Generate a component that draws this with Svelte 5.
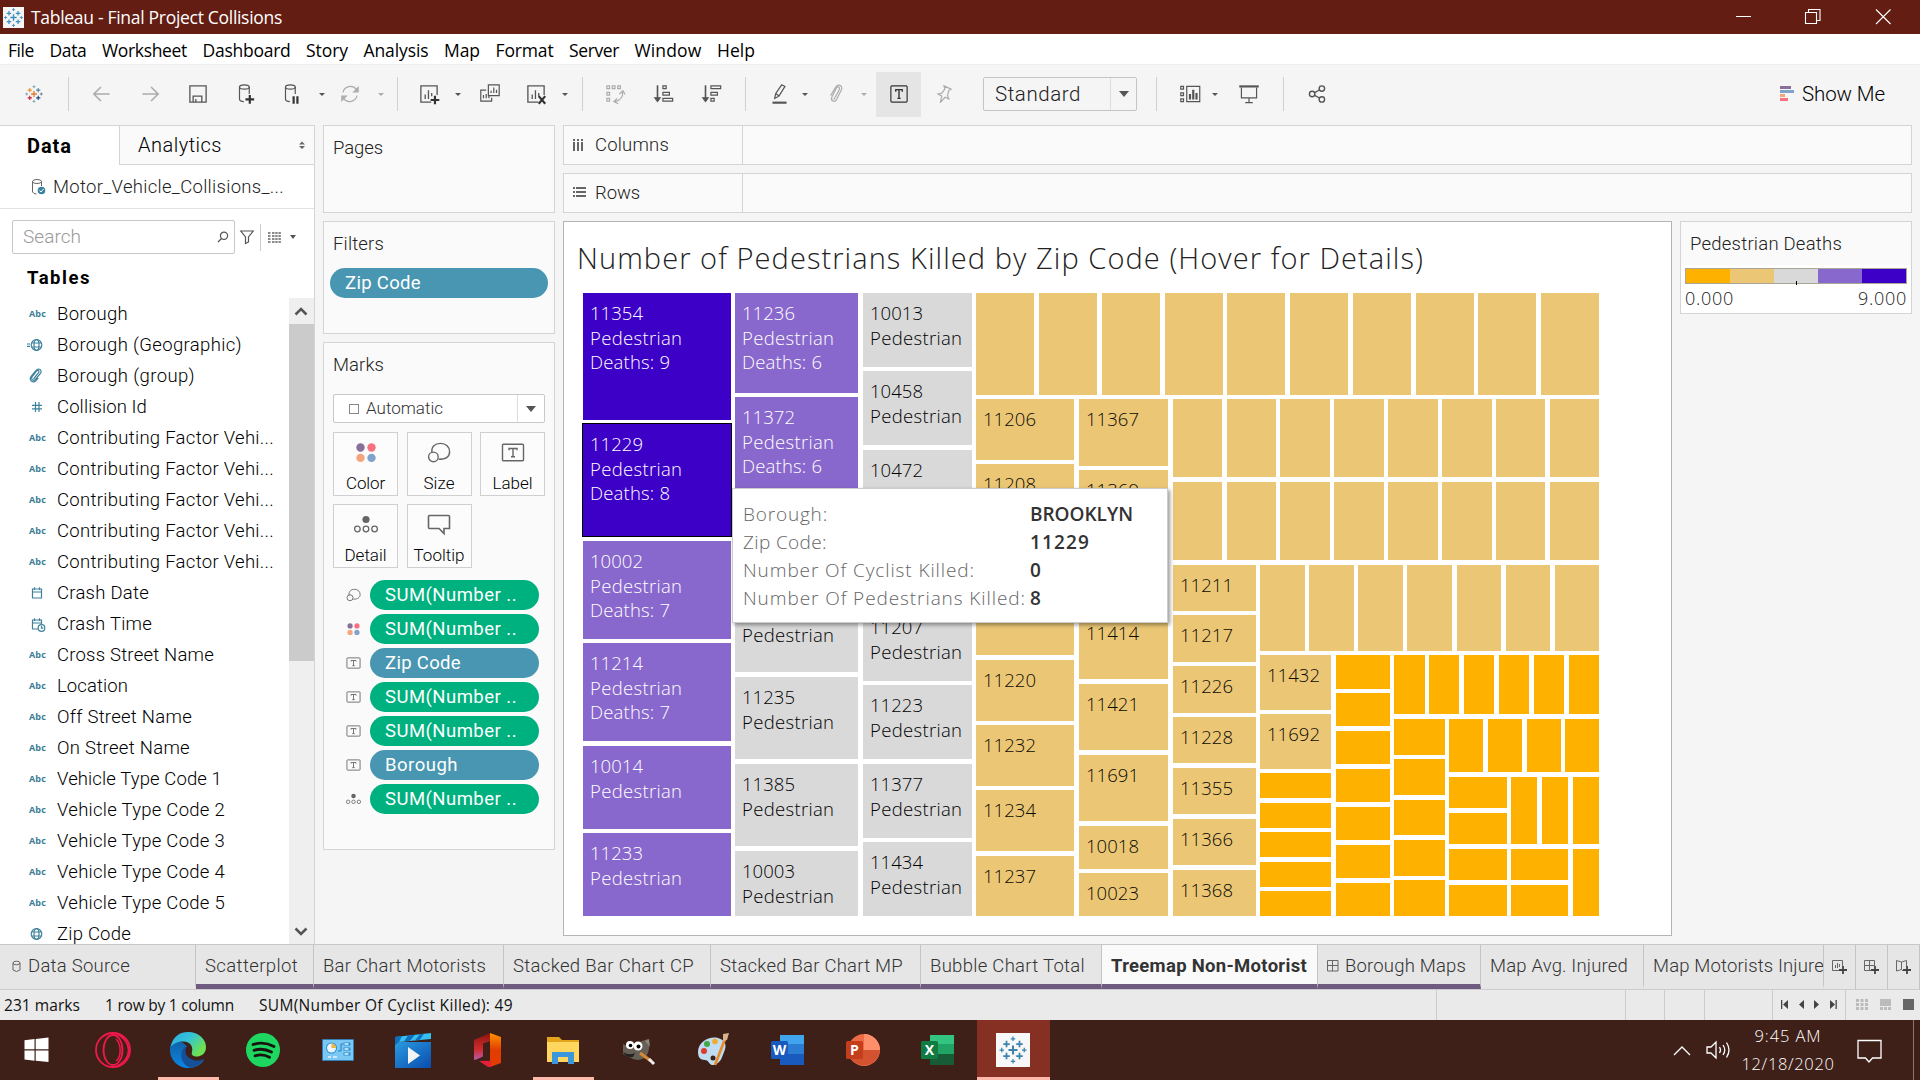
<script>
  // Spreads the letters of a label so that it spans the given width.
  function fit(node, width) {
    if (!width) return;
    node.style.letterSpacing = '0px';
    const natural = node.getBoundingClientRect().width;
    const count = node.textContent.length;
    node.style.letterSpacing = (width - natural) / count + 'px';
  }

  const menu = [
    ['File', 26], ['Data', 37], ['Worksheet', 85], ['Dashboard', 88], ['Story', 42], ['Analysis', 65],
    ['Map', 36], ['Format', 58], ['Server', 50], ['Window', 67], ['Help', 38]
  ];

  // kind, centre on the bar, faded
  const tools = [
    ['tableau', 34], ['sep', 69], ['back', 102, 1], ['forward', 150, 1], ['save', 198], ['dbadd', 246],
    ['dbpause', 292], ['caret', 322], ['refresh', 350, 1], ['caret', 381, 1], ['sep', 398], ['chartadd', 429],
    ['caret', 458], ['duplicate', 490], ['chartclear', 536], ['caret', 565], ['sep', 583], ['swap', 615, 1],
    ['sortasc', 664], ['sortdesc', 712], ['sep', 746], ['pen', 779], ['caret', 805], ['clip', 836, 1],
    ['caret', 864, 1], ['labels', 899], ['pin', 944, 1], ['select', 1060], ['sep', 1157], ['cards', 1190],
    ['caret', 1215], ['present', 1249], ['sep', 1284], ['share', 1317]
  ];
  const toolWidth = { sep: 1, caret: 8, labels: 45, select: 154 };
  let edge = 0;
  const toolbar = tools.map(([kind, centre, faded]) => {
    const w = toolWidth[kind] ?? 26;
    const start = Math.floor(centre - w / 2);
    const gap = start - edge;
    edge = start + w;
    return { kind, w, gap, faded };
  });

  const fields = [
    ['abc', 'Borough', 71], ['geo', 'Borough (Geographic)', 185], ['group', 'Borough (group)', 138],
    ['hash', 'Collision Id', 90], ['abc', 'Contributing Factor Vehi...', 217], ['abc', 'Contributing Factor Vehi...', 217],
    ['abc', 'Contributing Factor Vehi...', 217], ['abc', 'Contributing Factor Vehi...', 217],
    ['abc', 'Contributing Factor Vehi...', 217], ['date', 'Crash Date', 92], ['datetime', 'Crash Time', 95],
    ['abc', 'Cross Street Name', 157], ['abc', 'Location', 71], ['abc', 'Off Street Name', 135],
    ['abc', 'On Street Name', 133], ['abc', 'Vehicle Type Code 1', 165], ['abc', 'Vehicle Type Code 2', 168],
    ['abc', 'Vehicle Type Code 3', 168], ['abc', 'Vehicle Type Code 4', 168], ['abc', 'Vehicle Type Code 5', 168],
    ['globe', 'Zip Code', 74]
  ];

  const markButtons = [['color', 'Color', 39], ['size', 'Size', 31], ['label', 'Label', 40], ['detail', 'Detail', 42], ['tooltip', 'Tooltip', 51]];
  const pills = [
    ['size', 'SUM(Number ..', 0], ['color', 'SUM(Number ..', 0], ['label', 'Zip Code', 1], ['label', 'SUM(Number ..', 0],
    ['label', 'SUM(Number ..', 0], ['label', 'Borough', 1], ['detail', 'SUM(Number ..', 0]
  ];
  const pillText = { 'SUM(Number ..': 132, 'Zip Code': 76, Borough: 73 };

  // Treemap tiles: left, top, right, bottom, shade, label lines
  const P = 'Pedestrian';
  const tiles = [
    [583, 293, 731, 420, 4, ['11354', P, 'Deaths: 9']], [583, 424, 731, 536, 4, ['11229', P, 'Deaths: 8']],
    [583, 541, 731, 639, 3, ['10002', P, 'Deaths: 7']], [583, 643, 731, 741, 3, ['11214', P, 'Deaths: 7']],
    [583, 746, 731, 829, 3, ['10014', P]], [583, 833, 731, 916, 3, ['11233', P]],
    [735, 293, 858, 393, 3, ['11236', P, 'Deaths: 6']], [735, 397, 858, 497, 3, ['11372', P, 'Deaths: 6']],
    [735, 501, 858, 585, 3, []], [735, 590, 858, 672, 2, ['', P]],
    [735, 677, 858, 759, 2, ['11235', P]], [735, 764, 858, 846, 2, ['11385', P]], [735, 851, 858, 916, 2, ['10003', P]],
    [863, 293, 972, 367, 2, ['10013', P]], [863, 371, 972, 445, 2, ['10458', P]], [863, 450, 972, 524, 2, ['10472']],
    [863, 528, 972, 602, 2, []], [863, 607, 972, 681, 2, ['11207', P]], [863, 685, 972, 759, 2, ['11223', P]],
    [863, 764, 972, 838, 2, ['11377', P]], [863, 842, 972, 916, 2, ['11434', P]],
    ...[976, 1039, 1102, 1165, 1227, 1290, 1353, 1416, 1478, 1541].map((x) => [x, 293, x + 58, 395, 1, []]),
    [976, 399, 1074, 460, 1, ['11206']], [976, 464, 1074, 525, 1, ['11208']], [976, 529, 1074, 590, 1, []],
    [976, 594, 1074, 655, 1, []], [976, 660, 1074, 721, 1, ['11220']], [976, 725, 1074, 786, 1, ['11232']],
    [976, 790, 1074, 851, 1, ['11234']], [976, 856, 1074, 916, 1, ['11237']],
    [1079, 399, 1168, 466, 1, ['11367']], [1079, 470, 1168, 537, 1, ['11369']], [1079, 542, 1168, 608, 1, []],
    [1079, 613, 1168, 679, 1, ['11414']], [1079, 684, 1168, 750, 1, ['11421']], [1079, 755, 1168, 821, 1, ['11691']],
    [1079, 826, 1168, 869, 1, ['10018']], [1079, 873, 1168, 916, 1, ['10023']],
    ...[[1173, 1222], [1227, 1276], [1280, 1330], [1334, 1384], [1388, 1438], [1442, 1492], [1496, 1545], [1550, 1599]].flatMap(
      ([a, b]) => [[a, 399, b, 477, 1, []], [a, 482, b, 560, 1, []]]
    ),
    [1173, 565, 1256, 611, 1, ['11211']], [1173, 615, 1256, 662, 1, ['11217']], [1173, 666, 1256, 713, 1, ['11226']],
    [1173, 717, 1256, 763, 1, ['11228']], [1173, 768, 1256, 814, 1, ['11355']], [1173, 819, 1256, 865, 1, ['11366']],
    [1173, 870, 1256, 916, 1, ['11368']],
    ...[[1260, 1305], [1309, 1354], [1358, 1403], [1407, 1452], [1457, 1501], [1506, 1550], [1555, 1599]].map(([a, b]) => [a, 565, b, 651, 1, []]),
    [1260, 655, 1331, 710, 1, ['11432']], [1260, 714, 1331, 769, 1, ['11692']],
    ...[773, 803, 832, 862, 891].map((y) => [1260, y, 1331, y + 25, 0, []]),
    [1336, 655, 1390, 689, 0, []],
    ...[693, 731, 769, 807, 845, 883].map((y) => [1336, y, 1390, y + 33, 0, []]),
    [1394, 655, 1425, 714, 0, []],
    ...[1429, 1464, 1499, 1534, 1569].map((x) => [x, 655, x + 30, 714, 0, []]),
    ...[[719, 755], [759, 795], [800, 835], [840, 876], [880, 916]].map(([a, b]) => [1394, a, 1445, b, 0, []]),
    ...[1449, 1488, 1527, 1565].map((x) => [x, 719, x + 34, 772, 0, []]),
    ...[777, 813, 849, 885].map((y) => [1449, y, 1507, y + 31, 0, []]),
    ...[1511, 1542, 1573].map((x) => [x, 777, x + 26, 844, 0, []]),
    [1511, 849, 1568, 880, 0, []], [1511, 885, 1568, 916, 0, []], [1573, 849, 1599, 916, 0, []]
  ];
  const shades = ['#ffb100', '#ebc775', '#d9d9d9', '#8968cd', '#3d00c6'];
  const inks = ['#000', '#0c0a05', '#000', '#fff', '#fff'];
  const span = (s) => (s === P ? 92 : s.startsWith('D') ? 80 : 53);
  const lineY = [27, 52, 76];

  const tip = [
    ['Borough:', 85, 'BROOKLYN', 103], ['Zip Code:', 84, '11229', 60],
    ['Number Of Cyclist Killed:', 232, '0', 0], ['Number Of Pedestrians Killed:', 283, '8', 0]
  ];

  // label, tab width, text width, variant
  const tabs = [
    ['Data Source', 196, 102, 'source'], ['Scatterplot', 118, 93, 'used'], ['Bar Chart Motorists', 190, 163, 'used'],
    ['Stacked Bar Chart CP', 207, 181, 'used'], ['Stacked Bar Chart MP', 210, 183, 'used'], ['Bubble Chart Total', 181, 155, 'used'],
    ['Treemap Non-Motorist', 216, 196, 'used active'], ['Borough Maps', 163, 121, 'used dash'],
    ['Map Avg. Injured', 163, 138, ''], ['Map Motorists Injure', 180, 171, 'last']
  ];

  const apps = ['windows', 'opera', 'edge', 'spotify', 'panel', 'movies', 'office', 'explorer', 'gimp', 'paint', 'word', 'ppt', 'excel', 'tableauapp'];
</script>

{#snippet plus(x, y, r, c, w)}
  <path d={`M${x - r} ${y}h${2 * r}M${x} ${y - r}v${2 * r}`} stroke={c} stroke-width={w} fill="none" />
{/snippet}

{#snippet tableauMark(mono)}
  {@render plus(12, 12, 3.6, mono || '#e8762d', 1.6)}
  {@render plus(6.8, 7.2, 2.6, mono || '#eb912c', 1.4)}
  {@render plus(17.2, 7.2, 2.6, mono || '#59879b', 1.4)}
  {@render plus(6.8, 16.8, 2.6, mono || '#c72035', 1.4)}
  {@render plus(17.2, 16.8, 2.6, mono || '#1f457e', 1.4)}
  {@render plus(12, 3, 1.8, mono || '#7199a6', 1)}
  {@render plus(12, 21, 1.8, mono || '#7199a6', 1)}
  {@render plus(3, 12, 1.8, mono || '#7199a6', 1)}
  {@render plus(21, 12, 1.8, mono || '#5b6591', 1)}
{/snippet}

{#snippet markIcon(kind)}
  <svg class="mi" viewBox="0 0 24 20">
    {#if kind === 'color'}
      <circle cx="6.500" cy="5" r="4.200" fill="#87719a" /><circle cx="17.500" cy="5" r="4.200" fill="#f8717f" />
      <circle cx="6.500" cy="15.400" r="4.200" fill="#f4a57c" /><circle cx="17.500" cy="15.400" r="4.200" fill="#80a3cc" />
    {:else if kind === 'size'}
      <g fill="none" stroke="#666" stroke-width="1.400"><path d="M5 10.500C4 4 8 .9 13.600.9c5.400 0 9 3.600 9 8.300 0 4.800-4 7.600-11 7.600" /><circle cx="6.400" cy="14.400" r="4.800" /></g>
    {:else if kind === 'label'}
      <rect x="1.500" y="1.800" width="21" height="16.400" rx="1" fill="none" stroke="#666" stroke-width="1.400" />
      <path d="M8 7.800V6h8v1.800M12 6v8.200M10 14.200h4" fill="none" stroke="#666" stroke-width="1.400" />
    {:else if kind === 'detail'}
      <circle cx="12" cy="5" r="3.600" fill="#666" />
      <g fill="none" stroke="#666" stroke-width="1.300"><circle cx="3.400" cy="14.500" r="2.800" /><circle cx="12" cy="14.500" r="2.800" /><circle cx="20.600" cy="14.500" r="2.800" /></g>
    {:else}
      <path d="M2.500 1h19q1 0 1 1v12h-5.500v5L12 14H2.500q-1 0-1-1V2q0-1 1-1z" fill="none" stroke="#666" stroke-width="1.600" />
    {/if}
  </svg>
{/snippet}

{#snippet fieldIcon(kind)}
  <svg class="fi" viewBox="0 0 24 16" fill="none" stroke="#3f829d" stroke-width="1.200">
    {#if kind === 'geo' || kind === 'globe'}
      {#if kind === 'geo'}<path d="M2 7h3M2 9.400h3" />{/if}
      <circle cx="11.500" cy="8" r="5.300" /><ellipse cx="11.500" cy="8" rx="2.500" ry="5.300" /><path d="M6.600 6h9.800M6.600 10h9.800" />
    {:else if kind === 'group'}
      <path d="M8.500 11l5-6c1.500-2-.8-3.300-2-1.800L7.200 8.600C5.200 11.300 8.700 13.700 10.700 11.100L15.500 5.300C17.600 2.300 13.500-.6 11.100 2.300L6.300 8.200c-3 3.800 1.500 7.300 4.500 4.600l2.500-3" />
    {:else if kind === 'hash'}
      <path d="M10.500 3v10M14 3v10M7 6.300h10M7 9.800h10" />
    {:else}
      <path d="M7.500 4h9v9h-9zM7.500 7h9M9.500 2.300V5M14.500 2.300V5" />
      {#if kind === 'datetime'}<circle cx="16.500" cy="12" r="3.300" fill="#fff" /><path d="M16.500 10v2.200h1.800" />{/if}
    {/if}
  </svg>
{/snippet}

{#snippet toolIcon(kind)}
  <svg viewBox="0 0 24 24" width="26" height="26" fill="none" stroke="#555" stroke-width="1.100">
    {#if kind === 'tableau'}
      <g transform="translate(3 3) scale(.75)">{@render tableauMark('')}</g>
    {:else if kind === 'back'}
      <path d="M19 12H5M11 5.500L4.500 12l6.500 6.500" stroke-width="1.500" />
    {:else if kind === 'forward'}
      <path d="M5 12h14M13 5.500l6.500 6.500-6.500 6.500" stroke-width="1.500" />
    {:else if kind === 'save'}
      <path d="M5 4.500h14.500v15H4.500v-15zM7.500 19v-5h8v5M10 16.500V19" stroke-width="1.200" />
    {:else if kind === 'dbadd' || kind === 'dbpause'}
      <ellipse cx="10.500" cy="5.500" rx="4.500" ry="2" /><path d="M6 5.500V17q.5 2 4 2M15 5.500V12" />
      {#if kind === 'dbadd'}<path d="M15.500 13v8M11.500 17h8" stroke-width="2" stroke="#333" />{:else}<path d="M13.500 14v7M17 14v7" stroke-width="2" stroke="#333" />{/if}
    {:else if kind === 'refresh'}
      <path d="M5.500 10.500a7 7 0 0 1 12.500-2.500M18.500 13.500a7 7 0 0 1-12.500 2.500" /><path d="M19.500 6v4h-4zM4.500 18v-4h4z" fill="#555" />
    {:else if kind === 'chartadd' || kind === 'chartclear'}
      <path d="M14 19.500H4.500v-15h15V13M8.500 16.500v-4M11.500 16.500V8.500M14.500 14v-3" stroke-width="1.200" />
      {#if kind === 'chartadd'}<path d="M17.500 13.500v8M13.500 17.500h8" stroke-width="2" stroke="#333" />{:else}<path d="M14.500 14l6 7M20.500 14l-6 7" stroke-width="2" stroke="#333" />{/if}
    {:else if kind === 'duplicate'}
      <path d="M10.500 3.500h10v10h-10zM13 11V9M15.500 11V6M18 11V8M8.500 8.500H3.500v10h10v-3M6 16v-3M8.500 16v-4M11 16v-2" />
    {:else if kind === 'swap'}
      <path d="M4.500 4.500h2.500v2.500H4.500zM9.500 4.500H12v2.500H9.500zM14.500 4.500H17v2.500h-2.500zM4.500 10.500h2.500V13H4.500zM4.500 16h2.500v2.500H4.500zM19 10q1 7-7 9M16 12l3.300-3 2 3.500M14 16l-3 3 4 2" />
    {:else if kind === 'sortasc'}
      <path d="M6 4v14" stroke-width="1.500" /><path d="M3.500 15.500h5L6 19z" fill="#555" /><path d="M11 4.500h3V7h-3zM11 10.500h6V13h-6zM11 16h9v2.500h-9z" />
    {:else if kind === 'sortdesc'}
      <path d="M6 4v14" stroke-width="1.500" /><path d="M3.500 15.500h5L6 19z" fill="#555" /><path d="M11 4.500h9V7h-9zM11 10.500h6V13h-6zM11 16h3v2.500h-3z" />
    {:else if kind === 'pen'}
      <path d="M8 16l1-4.500L14.500 3.500l3 1.500L12 14zM9 11.500l3 2.300" /><path d="M6 20h13" stroke-width="2" />
    {:else if kind === 'clip'}
      <path d="M10 17l5-9c1-2.500-1.700-3.500-2.800-1.300l-4 8c-1.500 4 2.600 5.500 4.500 2L17 8c1.700-4-3.500-6-5.500-2L7 13.500" />
    {:else if kind === 'labels'}
      <rect x="4.500" y="4.500" width="15" height="15" rx="1" stroke="#333" /><path d="M9 10V8h6v2M12 8v8M10.500 16h3" stroke="#333" stroke-width="1.300" />
    {:else if kind === 'pin'}
      <path d="M12 4.500l6.500 3-2.200 1.500-1 4.500 1.200 3-3.500-1.500L8.500 20l1.500-6-3.500-2 3.500-.8 2.700-3.700z" />
    {:else if kind === 'cards'}
      <path d="M9 5h12v14H9zM3.500 5H6v2.500H3.500zM3.500 11H6v2.500H3.500zM3.500 16.500H6V19H3.500z" /><path d="M12 17v-5M15 17V8M18 17v-6" stroke-width="2" />
    {:else if kind === 'present'}
      <path d="M3 5h18" stroke-width="2" /><path d="M5 6v9.500h14V6M12 15.500V20M8.500 20h7" />
    {:else if kind === 'share'}
      <g stroke-width="1.300"><circle cx="7.500" cy="12" r="2.500" /><circle cx="16.500" cy="7" r="2.500" /><circle cx="16.500" cy="17" r="2.500" /><path d="M9.800 10.800l4.400-2.500M9.800 13.200l4.400 2.500" /></g>
    {/if}
  </svg>
{/snippet}

{#snippet docIcon(letter, light, mid, dark, badge)}
  <path d="M10 3h24v10H10z" fill={light} /><path d="M10 12h24v11H10z" fill={mid} /><path d="M10 22h24v11H10z" fill={dark} />
  <rect x="1" y="9" width="17" height="18" rx="1.500" fill={badge} />
  <text x="9.500" y="23" text-anchor="middle" font-size="14" font-weight="700" fill="#fff">{letter}</text>
{/snippet}

{#snippet appIcon(kind)}
  <svg viewBox="0 0 36 36" width="36" height="36">
    {#if kind === 'windows'}
      <path d="M4.500 8.300l10-1.300v10.300h-10zM15.700 7L28.500 5.600v11.700H15.700zM4.500 18.500h10v10.300l-10-1.300zM15.700 18.500h12.800V30l-12.800-1.300z" fill="#fff" />
    {:else if kind === 'opera'}
      <g fill="none" stroke="#f0184c" stroke-width="1.800"><circle cx="18" cy="18" r="17" /><ellipse cx="18" cy="18" rx="9.500" ry="15" /><path d="M20 1.200c18 7 18 27 0 33.600M21 7c5.500 5 5.500 18 0 22" stroke-width="1.500" /></g>
    {:else if kind === 'edge'}
      <defs>
        <linearGradient id="eg" x1="0" y1="0" x2="1" y2=".6"><stop offset="0" stop-color="#2fa8e6" /><stop offset=".5" stop-color="#33c3d9" /><stop offset=".95" stop-color="#6be052" /></linearGradient>
        <linearGradient id="eb" x1="0" y1="0" x2="0" y2="1"><stop offset="0" stop-color="#0f62a8" /><stop offset="1" stop-color="#0c86e2" /></linearGradient>
      </defs>
      <path d="M0 18C0 8 8 9 12 10l6 5-4 8c2 7 10 10 18 5l2-.5C31 33 25 36 18 36 8 36 0 28 0 18z" fill="url(#eb)" />
      <path d="M17 14c-9 3-7 19 4 21.800C27 35 31 31.500 34 27c-9 4-16 0-15.500-7.500z" fill="#154f98" />
      <path d="M.5 15C3 4 10 0 18 0c11 0 18 7.500 18 15 0 7-5 9.500-9.500 9.500-5.500 0-6-1.700-5-3.500C23.500 17 22 9.500 13 9.500 7 9.500 3 12 .5 15z" fill="url(#eg)" />
      <path d="M16.500 15c2.500-2 6 .5 5.200 5-.4 2 .2 3.500 3.300 4.500l-4 2.500c-5-2-7-8-4.500-12z" fill="#3e2019" />
    {:else if kind === 'spotify'}
      <circle cx="18" cy="18" r="17" fill="#1ed760" /><path d="M8 12.500q11-3.500 21 2M9 18.300q9-2.800 17.500 1.700M10 23.800q8-2.300 14.500 1.500" fill="none" stroke="#19130f" stroke-width="2.800" stroke-linecap="round" />
    {:else if kind === 'panel'}
      <rect x="2" y="7" width="32" height="22" rx="1" fill="#2f7fb5" /><rect x="3" y="8" width="30" height="20" fill="#7cc8f5" /><circle cx="11.500" cy="16" r="5.500" fill="#2d8ed0" /><circle cx="11.500" cy="16" r="4.500" fill="#e9f6fd" /><path d="M11.500 16v-4.500a4.500 4.500 0 0 1 4.500 4.500z" fill="#f5b43c" />
      <path d="M23.500 10.500h7v3h-7zM23.500 15.500h7v3h-7zM23.500 20.500h7v3h-7z" fill="#2d8ed0" /><path d="M24.500 12h4M24.500 17h4M24.500 22h4M8 25h3M13 25h4" stroke="#e5f6ff" stroke-width="1.500" /><path d="M18 19h3v-7h2" fill="none" stroke="#2d7db5" />
    {:else if kind === 'movies'}
      <defs><linearGradient id="mv" x1="0" y1="0" x2="1" y2="1"><stop offset="0" stop-color="#2a9be0" /><stop offset="1" stop-color="#0a4cae" /></linearGradient></defs>
      <path d="M0 10.500L6 10h30v26H0z" fill="url(#mv)" /><path d="M0 5L36 1v6L4 10l-4 5z" fill="#35c0f0" /><path d="M0 5l7-.800L4 10l-4 4zM13 3.500l7-.800-5 6-6 .7zM25 2.300l4-.500-4 6-5 .5z" fill="#0e6fc0" /><path d="M13 15v17l12-8.500z" fill="#f4f4f4" />
    {:else if kind === 'office'}
      <defs><linearGradient id="of" x1="0" y1="0" x2="0" y2="1"><stop offset="0" stop-color="#8d150f" /><stop offset=".6" stop-color="#d02b2e" /><stop offset="1" stop-color="#b65ba8" /></linearGradient><linearGradient id="og" x1="0" y1="0" x2="0" y2="1"><stop offset="0" stop-color="#ff9500" /><stop offset=".5" stop-color="#e23c00" /></linearGradient></defs>
      <path d="M4 8L20 1v8l-7 2.500v13L5 28q-1 0-1-1z" fill="url(#of)" /><path d="M20 1l11 4v26l-11 4z" fill="url(#og)" /><path d="M9 29l12-.3V35h-3z" fill="#e2203a" />
    {:else if kind === 'explorer'}
      <path d="M2 5h12l3 3h17v22H2z" fill="#e5a51a" /><path d="M2 10h32v20H2z" fill="#ffd75e" /><path d="M7 20h22v12h-6v-7H13v7H7z" fill="#3a97dd" />
    {:else if kind === 'gimp'}
      <path d="M3 12q5 3 10 0L28 7q3 10-2 18-8 6-17 0l-6-3z" fill="#655f55" /><path d="M25 9l4-2 1 8z" fill="#8e8678" /><circle cx="10" cy="13" r="4" fill="#fff" /><circle cx="18" cy="14" r="4.500" fill="#fff" /><circle cx="10.500" cy="13.500" r="1.800" /><circle cx="18.500" cy="14.500" r="2" /><path d="M3 20q6 4 12 1l-2 4q-7 1-10-5z" fill="#222" /><path d="M20 21l11 8" stroke="#d58b33" stroke-width="3" /><path d="M29 27l5 5" stroke="#eee" stroke-width="3" />
    {:else if kind === 'paint'}
      <path d="M3 20C3 10 14 4 23 6c8 2 9 8 6 14-2 5-3 11-10 13-5 1-5-5-9-5-5 0-7-3-7-8z" fill="#bfdcf0" /><circle cx="9" cy="19" r="3" fill="#dc3c30" /><circle cx="12" cy="12" r="3" fill="#42a94a" /><circle cx="20" cy="9.500" r="2.800" fill="#f2a92c" /><circle cx="18" cy="26" r="2.500" fill="#3e2019" /><path d="M30 7L20 33" stroke="#e68b27" stroke-width="2.600" /><path d="M28 2l6-1-2 7-4 1z" fill="#d9b48a" />
    {:else if kind === 'word'}
      {@render docIcon('W', '#41a5ee', '#2b7cd3', '#185abd', '#185abd')}
    {:else if kind === 'excel'}
      {@render docIcon('X', '#33c481', '#21a366', '#185c37', '#107c41')}
    {:else if kind === 'ppt'}
      <circle cx="19" cy="18" r="16" fill="#ed6c47" /><path d="M19 2a16 16 0 0 1 16 16H19z" fill="#ff8f6b" /><path d="M35 18a16 16 0 0 1-30 7l14-7z" fill="#d35230" />
      <rect x="1" y="9" width="17" height="18" rx="1.500" fill="#c43e1c" /><text x="9.500" y="23" text-anchor="middle" font-size="14" font-weight="700" fill="#fff">P</text>
    {:else}
      <rect x="0" y="1" width="34" height="34" fill="#f7f7f7" /><g transform="translate(2 3) scale(1.250)">{@render tableauMark('#3b83ae')}</g>
    {/if}
  </svg>
{/snippet}

<div class="screen">
  <header class="titlebar">
    <svg class="logo" viewBox="0 0 24 24"><rect width="24" height="24" fill="#f5f5f5" />{@render tableauMark('#3b8fc0')}</svg>
    <span use:fit={251}>Tableau - Final Project Collisions</span>
    <svg class="winbtns" viewBox="0 0 176 34" fill="none" stroke="#fff" stroke-width="1.100">
      <path d="M8 16.500h15M77.500 12.500h11v11h-11zM80.500 12V9.500h11.500v11H89M148 9.500l14.500 14.500M162.500 9.500L148 24" />
    </svg>
  </header>

  <nav class="menu">
    {#each menu as [label, w]}<span use:fit={w}>{label}</span>{/each}
  </nav>

  <div class="toolbar">
    {#each toolbar as t}
      <div class="tool {t.kind}" class:faded={t.faded} style:width="{t.w}px" style:margin-left="{t.gap}px">
        {#if t.kind === 'select'}
          <span use:fit={86}>Standard</span><i><b class="arrow"></b></i>
        {:else if t.kind === 'caret'}
          <b class="arrow small"></b>
        {:else if t.kind !== 'sep'}
          {@render toolIcon(t.kind)}
        {/if}
      </div>
    {/each}
    <div class="showme">
      <svg width="14" height="16"><path d="M0 0h11v3H0z" fill="#87719a" /><path d="M0 4h14v3H0z" fill="#80a3cc" /><path d="M0 8h5v3H0z" fill="#f4a57c" /><path d="M0 12h8v3H0z" fill="#f8717f" /></svg>
      <span use:fit={83}>Show Me</span>
    </div>
  </div>

  <main>
    <aside class="data">
      <div class="dtabs">
        <div class="dtab on"><span use:fit={45}>Data</span></div>
        <div class="dtab off"><span use:fit={84}>Analytics</span><svg width="6" height="8"><path d="M0 3.500L3 .5l3 3zM0 5l3 3 3-3z" fill="#666" /></svg></div>
      </div>
      <div class="source">
        <svg width="16" height="18" viewBox="0 0 16 18" fill="none" stroke="#666"><ellipse cx="6" cy="3.500" rx="4.500" ry="2" /><path d="M1.500 3.500V14q1 2 4 2M10.500 3.500V8" /><circle cx="10.500" cy="12.500" r="3.800" fill="#3b829e" stroke="none" /><path d="M8.500 12.500l1.500 1.500 2.500-3" stroke="#fff" /></svg>
        <span use:fit={231}>Motor_Vehicle_Collisions_...</span>
      </div>
      <div class="searchrow">
        <div class="search"><span use:fit={58}>Search</span><svg width="12" height="12" fill="none" stroke="#555" stroke-width="1.200"><circle cx="7" cy="4.800" r="3.600" /><path d="M4.500 7.500L1 11" /></svg></div>
        <svg class="funnel" width="14" height="14" fill="none" stroke="#555" stroke-width="1.200"><path d="M.8 1h12.400L8.500 7v5l-3 1.500V7z" /></svg>
        <i></i>
        <svg width="13" height="11" stroke="#666" stroke-width="1.300"><path d="M0 1h3M4 1h9M0 4h3M4 4h9M0 7h3M4 7h9M0 10h3M4 10h9" stroke-dasharray="2.500 .7" /></svg>
        <b class="arrow mid"></b>
      </div>
      <h2><span use:fit={64}>Tables</span></h2>
      <div class="listwrap">
        <div class="fields">
          {#each fields as [kind, name, w]}
            <div class="field">
              {#if kind === 'abc'}<em><span use:fit={17}>Abc</span></em>{:else}{@render fieldIcon(kind)}{/if}
              <span use:fit={w}>{name}</span>
            </div>
          {/each}
        </div>
        <div class="scroll">
          <svg width="24" height="26"><path d="M6.500 16.500L12 11l5.500 5.500" /></svg>
          <div class="thumb"></div>
          <svg width="24" height="26"><path d="M6.500 10.500L12 16l5.500-5.500" /></svg>
        </div>
      </div>
    </aside>

    <section class="cards">
      <div class="card pages"><h3><span use:fit={50}>Pages</span></h3></div>
      <div class="card filters"><h3><span use:fit={51}>Filters</span></h3><div class="pill blue"><span use:fit={76}>Zip Code</span></div></div>
      <div class="card marks">
        <h3><span use:fit={51}>Marks</span></h3>
        <div class="dropdown"><u></u><span use:fit={77}>Automatic</span><i><b class="arrow"></b></i></div>
        <div class="buttons">
          {#each markButtons as [kind, label, w]}
            <div class="mbtn">{@render markIcon(kind)}<span use:fit={w}>{label}</span></div>
          {/each}
        </div>
        <div class="pills">
          {#each pills as [kind, label, blue]}
            <div class="prow">{@render markIcon(kind)}<div class="pill" class:blue><span use:fit={pillText[label]}>{label}</span></div></div>
          {/each}
        </div>
      </div>
    </section>

    <section class="work">
      <div class="shelf"><div><svg width="11" height="13" fill="#666"><path d="M0 0h2v2H0zM4 0h2v2H4zM8 0h2v2H8zM0 3h2v9H0zM4 3h2v9H4zM8 3h2v9H8z" /></svg><span use:fit={74}>Columns</span></div></div>
      <div class="shelf"><div><svg width="13" height="12" fill="#666"><path d="M0 0h2v2H0zM0 4h2v2H0zM0 8h2v2H0zM3 0h10v2H3zM3 4h10v2H3zM3 8h10v2H3z" /></svg><span use:fit={45}>Rows</span></div></div>
      <div class="lower">
        <div class="viz">
          <h1><span use:fit={847}>Number of Pedestrians Killed by Zip Code (Hover for Details)</span></h1>
          <svg class="treemap" viewBox="582 292 1018 625" width="1018" height="625">
            {#each tiles as [x, y, r, b, shade, lines]}
              <rect {x} {y} width={r - x} height={b - y} fill={shades[shade]} />
              {#each lines as line, i}
                {#if line}<text x={x + 7} y={y + lineY[i]} fill={inks[shade]} textLength={span(line)}>{line}</text>{/if}
              {/each}
            {/each}
            <rect x="582.500" y="423.500" width="149" height="113" fill="none" stroke="#000" />
          </svg>
          <div class="tip">
            {#each tip as [k, kw, v, vw]}
              <span class="k"><span use:fit={kw}>{k}</span></span><span class="v"><span use:fit={vw}>{v}</span></span>
            {/each}
          </div>
        </div>
        <div class="legend">
          <h3><span use:fit={152}>Pedestrian Deaths</span></h3>
          <div class="ramp">{#each shades as c}<i style:background={c}></i>{/each}<s></s></div>
          <div class="ends"><span use:fit={49}>0.000</span><span use:fit={49}>9.000</span></div>
        </div>
      </div>
    </section>
  </main>

  <div class="tabs">
    {#each tabs as [label, w, tw, kind]}
      <div class="tab {kind}" style:width="{w}px">
        {#if kind === 'source'}<svg width="9" height="13" fill="none" stroke="#666"><ellipse cx="4.500" cy="3" rx="3.500" ry="1.800" /><path d="M1 3v7q3.500 3 7 0V3" /></svg>{/if}
        {#if kind === 'used dash'}<svg width="12" height="12" fill="none" stroke="#666"><path d="M.5.500h10.500v10.500H.5zM5.500.500v10.500M.5 5.500h10.500" /></svg>{/if}
        <span use:fit={tw}>{label}</span>
      </div>
    {/each}
    {#each ['sheet', 'dash', 'story'] as kind}
      <div class="newtab">
        <svg width="17" height="16" fill="none" stroke="#666">
          {#if kind === 'sheet'}<path d="M8 11.500H1.500V1.500h10V7M4.500 9V6M6.500 9V4M8.500 8V5" />{:else if kind === 'dash'}<path d="M8 11.500H1.500V1.500h10V7M6.500 1.500v10M1.500 6.500h10" />{:else}<path d="M8 12L6.500 10.500 1.500 12V1.500l5 1.500 5-1.500V7M6.500 3v7.500" />{/if}
          <path d="M12 7v8M8 11h8" stroke-width="1.800" stroke="#444" />
        </svg>
      </div>
    {/each}
  </div>

  <div class="status">
    <span use:fit={76}>231 marks</span><span use:fit={129}>1 row by 1 column</span><span use:fit={254}>SUM(Number Of Cyclist Killed): 49</span>
    <div class="cells">
      <i></i><i></i><i></i><i></i>
      <i><svg width="60" height="12" fill="#444"><path d="M2 1h1.300v9H2zM9 1v9L4 5.500zM25 1v9l-5-4.500zM35 1v9l5-4.500zM51 1v9l5-4.500zM56.500 1h1.300v9h-1.300z" /></svg></i>
      <i><svg width="60" height="12"><path d="M0 0h3v3H0zM4.500 0h3v3h-3zM9 0h3v3H9zM0 4h3v3H0zM4.500 4h3v3h-3zM9 4h3v3H9zM0 8h3v3H0zM4.500 8h3v3h-3zM9 8h3v3H9zM24 0h11v7H24zM24 8h3v3h-3zM28 8h3v3h-3zM32 8h3v3h-3z" fill="#bbb" /><path d="M47 0h11v11H47z" fill="#666" /></svg></i>
    </div>
  </div>

  <footer>
    {#each apps as app}
      <div class="app" class:open={app === 'edge' || app === 'explorer'} class:current={app === 'tableauapp'}>{@render appIcon(app)}</div>
    {/each}
    <div class="tray">
      <svg width="18" height="12"><path d="M1 11L9 3l8 8" /></svg>
      <svg width="26" height="22"><path d="M1 8h4l5-5v16l-5-5H1zM13.500 8q2 3 0 6M17 6q3.500 5 0 10M20.500 3.500q5 7.500 0 15" /></svg>
      <div class="clock"><span use:fit={67}>9:45 AM</span><span use:fit={93}>12/18/2020</span></div>
      <svg class="note" width="25" height="25"><path d="M1 1.500h23v17.500h-8.500L12 23l-3.500-4H1z" stroke-width="1.600" /></svg>
      <i></i>
    </div>
  </footer>
</div>

<style>
  :global(body) { margin: 0; background: #f5f5f5; }
  * { box-sizing: border-box; }
  .screen { width: 1920px; height: 1080px; display: flex; flex-direction: column; overflow: hidden; background: #f5f5f5; font-family: Roboto, "Liberation Sans", sans-serif; font-size: 18.500px; font-weight: 300; color: #222; }
  span { white-space: nowrap; display: inline-block; }
  svg { display: block; flex: none; overflow: visible; }
  h1, h2, h3 { margin: 0; font-weight: inherit; }

  .titlebar { height: 34px; flex: none; background: #631d12; color: #fff; display: flex; align-items: center; padding-left: 3px; font: 17.500px "Open Sans", sans-serif; }
  .logo { width: 21px; height: 21px; margin-right: 7px; }
  .winbtns { width: 176px; height: 34px; margin-left: auto; margin-right: 16px; }

  .menu { height: 30px; flex: none; background: #fff; display: flex; align-items: center; gap: 15.500px; padding: 1px 0 0 8px; font: 17.500px "Open Sans", sans-serif; color: #000; }

  .toolbar { height: 61px; flex: none; display: flex; align-items: center; border-top: 1px solid #eee; padding-bottom: 2px; }
  .tool { height: 44px; flex: none; display: flex; align-items: center; justify-content: center; }
  .tool.faded { opacity: .45; }
  .sep { background: #d0d0d0; height: 34px; }
  .labels { background: #e5e5e5; height: 45px; }
  .select { height: 34px; border: 1px solid #c4c4c4; border-radius: 2px; justify-content: space-between; padding-left: 11px; font-size: 20.500px; }
  .select i { width: 26px; height: 32px; border-left: 1px solid #ddd; display: flex; align-items: center; justify-content: center; }
  .arrow { width: 0; height: 0; border: 5px solid transparent; border-top: 6px solid #555; border-bottom: 0; }
  .arrow.small { border-width: 3px; border-top-width: 3px; border-bottom: 0; }
  .arrow.mid { border-width: 3.500px; border-top-width: 4px; border-bottom: 0; }
  .showme { margin-left: auto; margin-right: 35px; display: flex; align-items: center; gap: 8px; font-size: 20.500px; color: #000; }

  main { height: 819px; flex: none; display: flex; gap: 8px; }
  .data { width: 315px; height: 819px; background: #fff; border-top: 1px solid #d4d4d4; border-right: 1px solid #d4d4d4; display: flex; flex-direction: column; color: #111; }
  .dtabs { display: flex; height: 39px; flex: none; font-size: 20px; color: #000; }
  .dtab { display: flex; align-items: center; }
  .dtab.on { width: 119px; font-weight: 700; padding-left: 27px; }
  .dtab.off { flex: 1; background: #fafafa; border-left: 1px solid #d4d4d4; border-bottom: 1px solid #d4d4d4; padding: 0 9px 0 18px; justify-content: space-between; }
  .source { height: 44px; flex: none; border-bottom: 1px solid #e2e2e2; display: flex; align-items: center; gap: 6px; padding-left: 31px; color: #222; }
  .searchrow { height: 34px; flex: none; margin-top: 11px; padding-left: 12px; display: flex; align-items: center; }
  .search { width: 223px; height: 34px; border: 1px solid #c8c8c8; border-radius: 2px; display: flex; align-items: center; justify-content: space-between; padding: 0 5px 0 10px; color: #999; font-size: 19px; }
  .search span { margin-top: -2px; }
  .funnel { margin-left: 5px; }
  .searchrow i { width: 1px; height: 27px; background: #ccc; margin: 0 7px 0 6px; }
  .searchrow .mid { margin-left: 9px; }
  h2 { font-weight: 700; font-size: 18.500px; height: 44px; flex: none; padding: 13px 0 0 27px; line-height: 22px; color: #000; }
  .listwrap { flex: 1; display: flex; min-height: 0; }
  .fields { flex: 1; overflow: hidden; }
  .field { height: 31px; display: flex; align-items: center; padding-left: 25px; }
  .field > span { color: #000; }
  .field em { width: 32px; padding-left: 4px; font: 700 9px/10px "Open Sans", sans-serif; color: #3b7c96; }
  .fi { width: 24px; height: 16px; margin-right: 8px; }
  .scroll { width: 25px; background: #efefef; display: flex; flex-direction: column; justify-content: space-between; }
  .scroll path { fill: none; stroke: #555; stroke-width: 2.500; }
  .thumb { height: 337px; background: #cbcbcb; margin-bottom: 257px; }

  .cards { width: 232px; display: flex; flex-direction: column; }
  .card { background: #fafafa; border: 1px solid #d4d4d4; padding: 0 6px; }
  h3 { font-size: 18.500px; line-height: 24px; padding: 10px 0 0 3px; color: #222; }
  .pages { height: 88px; } .filters { height: 113px; margin-top: 8px; } .marks { height: 508px; margin-top: 8px; }
  .filters .pill { width: 218px; margin-top: 12px; }
  .pill { height: 30px; border-radius: 15px; background: #00b180; color: #fff; display: flex; align-items: center; padding-left: 15px; font-weight: 400; font-size: 18.500px; }
  .pill.blue { background: #4996b2; }
  .dropdown { height: 29px; margin: 17px 0 0 3px; width: 212px; background: #fff; border: 1px solid #c8c8c8; border-radius: 2px; display: flex; align-items: center; font-size: 17px; color: #333; }
  .dropdown span { margin-top: -2px; }
  .dropdown u { width: 10px; height: 10px; border: 1px solid #888; margin: 0 7px 0 15px; }
  .dropdown i { width: 27px; height: 27px; margin-left: auto; border-left: 1px solid #ddd; display: flex; align-items: center; justify-content: center; }
  .buttons { display: grid; grid-template-columns: 65px 65px 65px; gap: 8px 8.500px; margin: 9px 0 0 3px; }
  .mbtn { height: 64px; border: 1px solid #d0d0d0; background: #fcfcfc; display: flex; flex-direction: column; align-items: center; padding-top: 9px; font-size: 17px; line-height: 22px; color: #000; }
  .mi { width: 24px; height: 21px; margin-bottom: 9px; }
  .pills { margin-top: 12px; display: flex; flex-direction: column; gap: 4px; }
  .prow { display: flex; align-items: center; padding-left: 16px; gap: 9px; }
  .prow .mi { width: 15px; height: 14px; margin: 0; }
  .prow .pill { width: 169px; }

  .work { width: 1349px; display: flex; flex-direction: column; }
  .shelf { height: 40px; flex: none; margin-bottom: 8px; background: #fafafa; border: 1px solid #d4d4d4; }
  .shelf div { width: 179px; height: 38px; border-right: 1px solid #d4d4d4; display: flex; align-items: center; padding-left: 9px; }
  .shelf svg { width: 22px; }
  .lower { display: flex; gap: 8px; align-items: flex-start; }
  .viz { width: 1109px; height: 715px; border: 1px solid #b4b4b4; background: #fff; position: relative; padding-left: 18px; }
  h1 { height: 70px; margin-left: -5px; line-height: 71px; font-family: "Open Sans", sans-serif; font-weight: 300; font-size: 29px; color: #222; }
  .treemap text { font: 300 18.500px "Open Sans", sans-serif; }
  .tip { position: absolute; left: 168px; top: 266px; width: 436px; height: 135px; background: #fff; border: 1px solid #ccc; box-shadow: 2px 2px 4px rgba(0, 0, 0, .4); padding: 11px 0 0 10px; display: grid; grid-template-columns: 287px 1fr; grid-auto-rows: 28px; font: 19px/28px "Open Sans", sans-serif; }
  .k { color: #666; font-weight: 300; } .v { color: #333; font-weight: 600; }
  .legend { width: 232px; height: 93px; border: 1px solid #d4d4d4; background: #fff; }
  .legend h3 { background: #fafafa; height: 43px; padding: 10px 0 0 9px; }
  .ramp { height: 16px; margin: 3px 4px 0; border: 1px solid #aaa696; display: flex; position: relative; }
  .ramp i { flex: 1; }
  .ramp s { position: absolute; left: 110px; top: 12px; width: 1px; height: 4px; background: #000; }
  .ends { display: flex; justify-content: space-between; padding: 1px 4px; font: 300 18px/26px "Open Sans", sans-serif; }

  .tabs { height: 46px; flex: none; display: flex; background: #e6e6e6; border-top: 1px solid #c8c8c8; border-bottom: 1px solid #ccc; }
  .tab { flex: none; border-right: 1px solid #c4c4c4; border-bottom: 5px solid transparent; padding: 3px 0 0 9px; display: flex; align-items: center; color: #333; overflow: hidden; }
  .tab.used { border-bottom-color: #6f5a80; }
  .tab.active { background: #fafafa; font-weight: 700; }
  .tab.source { padding-left: 12px; gap: 7px; }
  .tab.dash { gap: 6px; }
  .newtab { flex: 1; border-right: 1px solid #c4c4c4; display: flex; align-items: center; justify-content: center; }
  .status { height: 30px; flex: none; background: #eaeaea; display: flex; align-items: center; gap: 25px; padding-left: 4px; font: 15.500px "Open Sans", sans-serif; color: #111; }
  .cells { margin-left: auto; height: 30px; display: grid; grid-template-columns: 189px 39px 40px 68px 73px 75px; }
  .cells i { border-left: 1px solid #ccc; display: flex; align-items: center; padding-left: 6px; }
  .cells i:last-child { padding-left: 10px; }

  footer { height: 60px; flex: none; background: #3e2019; display: flex; font-family: "Open Sans", sans-serif; }
  .app { width: 75px; height: 60px; flex: none; display: flex; align-items: center; justify-content: center; position: relative; }
  .app.current { background: #863023; width: 73px; margin-left: 2px; border-bottom: 3px solid #ffb9ab; padding-top: 3px; }
  .app.open::after { content: ""; position: absolute; left: 8px; bottom: 0; width: 61px; height: 3px; background: #ffb9ab; }
  .tray { margin-left: auto; display: flex; align-items: center; color: #fff; }
  .tray path { fill: none; stroke: #fff; stroke-width: 1.300; }
  .tray > svg:nth-child(2) { margin: 0 8px 0 15px; }
  .clock { width: 98px; display: flex; flex-direction: column; align-items: center; font-size: 16.500px; line-height: 28px; padding-right: 2px; }
  .note { margin: 3px 31px 0 19px; }
  .tray i { width: 1px; height: 60px; background: #8b7771; margin-right: 6px; }
</style>
